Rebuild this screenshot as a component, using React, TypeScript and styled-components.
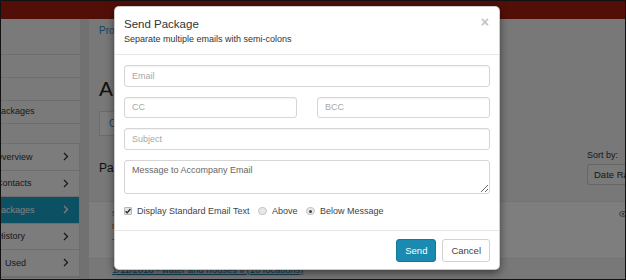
import styled, { createGlobalStyle } from "styled-components";

const GlobalStyle = createGlobalStyle`
  html, body {
    margin: 0;
    padding: 0;
    background: #fff;
  }
  body {
    font-family: "Liberation Sans", Arial, sans-serif;
    color: #333;
  }
  * {
    box-sizing: border-box;
  }
`;

const Frame = styled.div`
  position: relative;
  width: 626px;
  height: 280px;
  border: 1px solid #111;
  overflow: hidden;
  background: #f0f0f0;
  display: flex;
  flex-direction: column;
`;

const TopBar = styled.div`
  height: 18px;
  flex: none;
  background: #a41e11;
`;

const Page = styled.div`
  flex: 1;
  display: flex;
  min-height: 0;
`;

const Sidebar = styled.div`
  width: 79px;
  flex: none;
  background: #f5f5f5;
  padding-top: 35px;
  overflow: hidden;
`;

const SideLinks = styled.div`
  border-top: 1px solid #dcdcdc;
`;

const SideLink = styled.div`
  height: 23px;
  border-bottom: 1px solid #dcdcdc;
  font-size: 9px;
  line-height: 21px;
  margin-left: -7px;
  color: #333;
  padding-left: 1px;
`;

const NavCard = styled.div`
  margin-top: 19px;
  border: 1px solid #dcdcdc;
  border-left: none;
  background: #f8f8f8;
`;

const NavItem = styled.div<{ $active?: boolean }>`
  height: 26.5px;
  display: flex;
  align-items: center;
  padding-right: 10px;
  border-bottom: 1px solid #dcdcdc;
  font-size: 9px;
  color: ${(p) => (p.$active ? "#fff" : "#333")};
  background: ${(p) => (p.$active ? "#16a0c6" : "transparent")};
`;

const NavLabel = styled.span<{ $shift: number }>`
  flex: 1;
  margin-left: ${(p) => p.$shift}px;
  white-space: nowrap;
`;

const Gutter = styled.div`
  width: 9px;
  flex: none;
  background: #e2e2e2;
`;

const Main = styled.div`
  flex: 1;
  position: relative;
  padding: 6px 0 0 10px;
  display: flex;
  flex-direction: column;
`;

const Crumb = styled.div`
  font-size: 10px;
  color: #2a8cbc;
  height: 14px;
`;

const Heading = styled.h1`
  margin: 38px 0 0;
  font-size: 21px;
  font-weight: normal;
  color: #222;
  line-height: 24px;
`;

const TabBox = styled.div`
  margin-top: 10px;
  width: 40px;
  height: 25px;
  border: 1px solid #d8d8d8;
  background: #fafafa;
  font-size: 10px;
  line-height: 23px;
  padding-left: 9px;
  color: #2a8cbc;
`;

const ListHead = styled.div`
  display: flex;
  justify-content: space-between;
  align-items: flex-end;
  margin-top: 14px;
`;

const ListTitle = styled.div`
  font-size: 12px;
  color: #222;
  padding-bottom: 10px;
`;

const SortBox = styled.div`
  display: flex;
  flex-direction: column;
  gap: 4px;
  font-size: 9px;
  width: 38px;
`;

const DateButton = styled.div`
  height: 21px;
  border: 1px solid #ccc;
  border-right: none;
  border-radius: 3px 0 0 3px;
  background: #f4f4f4;
  padding-left: 6px;
  line-height: 19px;
  white-space: nowrap;
  overflow: hidden;
  font-size: 9.5px;
`;

const Card = styled.div`
  position: relative;
  margin: 16px 0 0 -10px;
  height: 58px;
  background: #fdfdfd;
  border-top: 1px solid #e6e6e6;
  border-bottom: 1px solid #e6e6e6;
  padding: 6px 0 0 23px;
  font-size: 9px;
  display: flex;
  flex-direction: column;
  gap: 3px;
`;

const CardLink = styled.span`
  color: #2a8cbc;
`;

const CardMeta = styled.span<{ $color: string }>`
  color: ${(p) => p.$color};
`;

const EyeIcon = styled.svg`
  position: absolute;
  right: -2px;
  top: 9px;
`;

const BottomLink = styled.div`
  margin: 5px 0 0 13px;
  font-size: 9.5px;
  color: #1f7fae;
  text-decoration: underline;
  white-space: nowrap;
`;

const Overlay = styled.div`
  position: absolute;
  inset: 0;
  background: rgba(0, 0, 0, 0.5);
`;

const Modal = styled.div`
  position: absolute;
  left: 113px;
  top: 5px;
  width: 386px;
  background: #fff;
  border-radius: 5px;
  box-shadow: 0 3px 9px rgba(0, 0, 0, 0.5);
  border: 1px solid rgba(0, 0, 0, 0.2);
`;

const Header = styled.div`
  position: relative;
  padding: 10px 9px 9px;
  border-bottom: 1px solid #e5e5e5;
`;

const Title = styled.h4`
  margin: 0 0 2px;
  font-size: 11.5px;
  line-height: 14px;
  font-weight: normal;
  color: #333;
`;

const Subtitle = styled.div`
  font-size: 9px;
  line-height: 12px;
  color: #333;
`;

const Close = styled.button`
  position: absolute;
  top: 8px;
  right: 10px;
  border: none;
  background: none;
  padding: 0;
  font-family: "Liberation Sans", Arial, sans-serif;
  font-size: 14px;
  font-weight: bold;
  line-height: 14px;
  color: #c4c4c4;
`;

const Body = styled.div`
  padding: 10px 9px 13px 9px;
  display: flex;
  flex-direction: column;
  gap: 10px;
`;

const Input = styled.input`
  display: block;
  width: 100%;
  height: 21.5px;
  padding: 0 7px;
  border: 1px solid #d6d6d6;
  border-radius: 3px;
  font-family: "Liberation Sans", Arial, sans-serif;
  font-size: 9px;
  color: #555;
  box-shadow: inset 0 1px 1px rgba(0, 0, 0, 0.05);
  &::placeholder {
    color: #a8a8a8;
  }
`;

const Pair = styled.div`
  display: grid;
  grid-template-columns: 1fr 1fr;
  gap: 20px;
`;

const TextArea = styled.textarea`
  display: block;
  width: 100%;
  height: 34.5px;
  padding: 4px 7px;
  border: 1px solid #d6d6d6;
  border-radius: 3px;
  font-family: "Liberation Sans", Arial, sans-serif;
  font-size: 9px;
  color: #555;
  &::placeholder {
    color: #666;
  }
`;

const Options = styled.div`
  display: flex;
  align-items: center;
  margin-top: 1px;
  height: 12px;
  font-size: 9px;
  color: #444;
`;

const Option = styled.label`
  display: flex;
  align-items: center;
  gap: 5px;
  margin-right: 9px;
`;

const CheckBox = styled.span`
  width: 8px;
  height: 8px;
  border: 1px solid #b5b5b5;
  border-radius: 1px;
  background: #e4e4e4;
  display: flex;
  align-items: center;
  justify-content: center;
`;

const Radio = styled.span<{ $checked?: boolean }>`
  width: 8.5px;
  height: 8.5px;
  border-radius: 50%;
  border: 1px solid #c4c4c4;
  background: #e8e8e8;
  display: flex;
  align-items: center;
  justify-content: center;
  &::after {
    content: "";
    width: 3px;
    height: 3px;
    border-radius: 50%;
    background: ${(p) => (p.$checked ? "#444" : "transparent")};
  }
`;

const Footer = styled.div`
  display: flex;
  justify-content: flex-end;
  gap: 6px;
  padding: 8px 9px 7px;
  border-top: 1px solid #e5e5e5;
`;

const Button = styled.button<{ $primary?: boolean }>`
  height: 22.5px;
  padding: 0 8px;
  border-radius: 3px;
  font-family: "Liberation Sans", Arial, sans-serif;
  font-size: 9.5px;
  border: 1px solid ${(p) => (p.$primary ? "#13789a" : "#d2d2d2")};
  background: ${(p) => (p.$primary ? "#1a8ab0" : "#fff")};
  color: ${(p) => (p.$primary ? "#fff" : "#444")};
`;

function Chevron() {
  return (
    <svg width="6" height="9" viewBox="0 0 6 9">
      <path d="M1 1l3.5 3.5L1 8" fill="none" stroke="currentColor" strokeWidth="1.3" />
    </svg>
  );
}

const navItems = [
  { label: "Overview", shift: -6 },
  { label: "Contacts", shift: -5 },
  { label: "Packages", shift: -6, active: true },
  { label: "History", shift: -4 },
  { label: "Used", shift: 4 },
];

export default function App() {
  return (
    <>
      <GlobalStyle />
      <Frame>
        <TopBar />
        <Page>
          <Sidebar>
            <SideLinks>
              <SideLink />
              <SideLink />
              <SideLink>Packages</SideLink>
            </SideLinks>
            <NavCard>
              {navItems.map((n) => (
                <NavItem key={n.label} $active={n.active}>
                  <NavLabel $shift={n.shift}>{n.label}</NavLabel>
                  <Chevron />
                </NavItem>
              ))}
            </NavCard>
          </Sidebar>
          <Gutter />
          <Main>
            <Crumb>Projects</Crumb>
            <Heading>All Packages</Heading>
            <TabBox>C</TabBox>
            <ListHead>
              <ListTitle>Packages</ListTitle>
              <SortBox>
                <span>Sort by:</span>
                <DateButton>Date Range</DateButton>
              </SortBox>
            </ListHead>
            <Card>
              <CardLink>s</CardLink>
              <CardMeta $color="#b06a2a">r</CardMeta>
              <CardMeta $color="#555">-</CardMeta>
              <EyeIcon width="8" height="6" viewBox="0 0 8 6">
                <ellipse cx="4" cy="3" rx="3.5" ry="2.4" fill="none" stroke="#666" strokeWidth="0.9" />
                <circle cx="4" cy="3" r="1.1" fill="#666" />
              </EyeIcon>
            </Card>
            <BottomLink>1/11/2018 - water and houses ii (10 locations)</BottomLink>
          </Main>
        </Page>
        <Overlay />
        <Modal>
          <Header>
            <Title>Send Package</Title>
            <Subtitle>Separate multiple emails with semi-colons</Subtitle>
            <Close>×</Close>
          </Header>
          <Body>
            <Input placeholder="Email" />
            <Pair>
              <Input placeholder="CC" />
              <Input placeholder="BCC" />
            </Pair>
            <Input placeholder="Subject" />
            <TextArea placeholder="Message to Accompany Email" />
            <Options>
              <Option>
                <CheckBox>
                  <svg width="6" height="6" viewBox="0 0 6 6">
                    <path d="M0.6 3.2l1.6 1.6L5.4 1" fill="none" stroke="#222" strokeWidth="1.3" />
                  </svg>
                </CheckBox>
                Display Standard Email Text
              </Option>
              <Option>
                <Radio />
                Above
              </Option>
              <Option>
                <Radio $checked />
                Below Message
              </Option>
            </Options>
          </Body>
          <Footer>
            <Button $primary>Send</Button>
            <Button>Cancel</Button>
          </Footer>
        </Modal>
      </Frame>
    </>
  );
}
